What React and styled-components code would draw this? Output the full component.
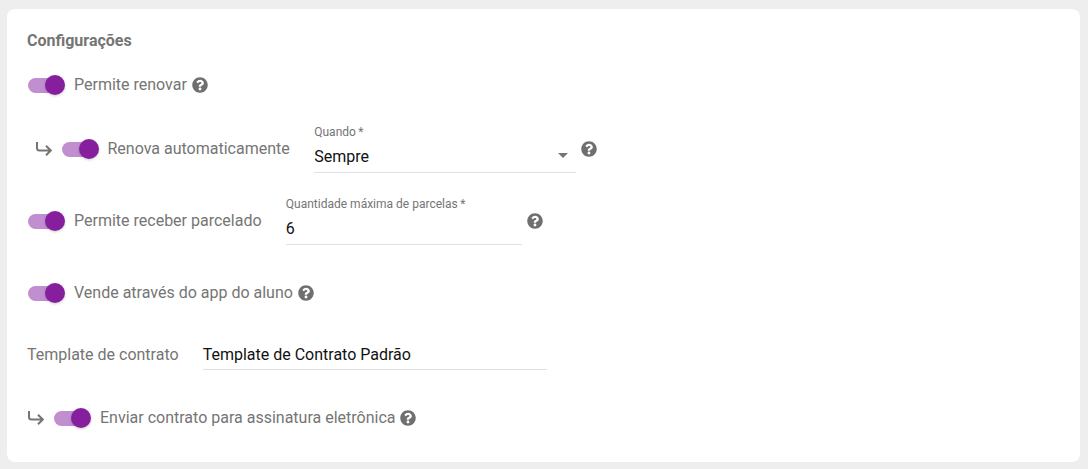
import React from 'react';
import styled, { createGlobalStyle } from 'styled-components';
import { FaQuestionCircle } from 'react-icons/fa';

const GlobalStyle = createGlobalStyle`
  html, body {
    margin: 0;
    padding: 0;
    background: #eeeeee;
    font-family: Roboto, sans-serif;
  }
`;

const Page = styled.div`
  height: 469px;
  padding: 9px 8px 7px 7px;
  box-sizing: border-box;
`;

const Card = styled.div`
  height: 100%;
  box-sizing: border-box;
  padding: 22px 20px 0;
  background: #fff;
  border-radius: 8px;
`;

const Title = styled.h2`
  margin: 0;
  height: 19px;
  font-size: 16px;
  line-height: 19px;
  font-weight: 700;
  color: #757575;
`;

const Row = styled.div`
  display: flex;
  align-items: center;
  height: ${(p) => p.$height}px;
  margin-top: ${(p) => p.$top}px;
  padding-left: ${(p) => p.$indent || 0}px;
`;

const Track = styled.span`
  position: relative;
  display: block;
  flex: none;
  width: 34px;
  height: 15px;
  margin-left: 1px;
  margin-right: ${(p) => p.$gap || 12}px;
  border-radius: 8px;
  background: #c18fd0;
`;

const Thumb = styled.span`
  position: absolute;
  top: -3px;
  right: -3px;
  width: 20px;
  height: 20px;
  border-radius: 50%;
  background: #861f9e;
  box-shadow: 0 1px 3px rgba(0, 0, 0, 0.2);
`;

const Label = styled.span`
  font-size: 16px;
  line-height: 20px;
  color: #757575;
  white-space: nowrap;
`;

const Help = styled(FaQuestionCircle)`
  flex: none;
  width: 16px;
  height: 16px;
  margin-left: 5px;
  color: #6f6f6f;
`;

const Arrow = styled.svg`
  flex: none;
  width: 16px;
  height: 14px;
  margin-right: 9px;
  fill: none;
  stroke: #757575;
  stroke-width: 2;
`;

const Field = styled.div`
  width: ${(p) => p.$width}px;
  margin-left: ${(p) => p.$left}px;
  flex: none;
  border-bottom: 1px solid #e0e0e0;
  position: relative;
`;

const FieldLabel = styled.div`
  font-size: 12px;
  line-height: 14px;
  color: #757575;
`;

const FieldValue = styled.div`
  font-size: 16px;
  line-height: 19px;
  color: #111;
  padding: ${(p) => p.$pad || '8px 0 6px'};
`;

const Caret = styled.span`
  position: absolute;
  right: 8px;
  bottom: 14px;
  width: 0;
  height: 0;
  border-left: 5px solid transparent;
  border-right: 5px solid transparent;
  border-top: 5px solid #757575;
`;

const Switch = ({ gap }) => (
  <Track $gap={gap}>
    <Thumb />
  </Track>
);

const ArrowIcon = () => (
  <Arrow viewBox="0 0 16 14">
    <path d="M1 0V6Q1 8.5 3.5 8.5H14.5M10 3.8L14.8 8.5L10 13.2" />
  </Arrow>
);

export default function App() {
  return (
    <Page>
      <GlobalStyle />
      <Card>
        <Title>Configurações</Title>

        <Row $top={25} $height={20}>
          <Switch />
          <Label>Permite renovar</Label>
          <Help />
        </Row>

        <Row $top={30} $height={48} $indent={9}>
          <ArrowIcon />
          <Switch gap={11.5} />
          <Label>Renova automaticamente</Label>
          <Field $width={262} $left={24.5}>
            <FieldLabel>Quando{'\u2009'}*</FieldLabel>
            <FieldValue>Sempre</FieldValue>
            <Caret />
          </Field>
          <Help />
        </Row>

        <Row $top={24} $height={48}>
          <Switch />
          <Label>Permite receber parcelado</Label>
          <Field $width={236} $left={24.3}>
            <FieldLabel>Quantidade máxima de parcelas{'\u2009'}*</FieldLabel>
            <FieldValue>6</FieldValue>
          </Field>
          <Help />
        </Row>

        <Row $top={38} $height={20}>
          <Switch />
          <Label>Vende através do app do aluno</Label>
          <Help />
        </Row>

        <Row $top={37} $height={30}>
          <Label>Template de contrato</Label>
          <Field $width={344} $left={24}>
            <FieldValue $pad="5px 0 5px">Template de Contrato Padrão</FieldValue>
          </Field>
        </Row>

        <Row $top={37} $height={22} $indent={1}>
          <ArrowIcon />
          <Switch />
          <Label>Enviar contrato para assinatura eletrônica</Label>
          <Help />
        </Row>
      </Card>
    </Page>
  );
}
